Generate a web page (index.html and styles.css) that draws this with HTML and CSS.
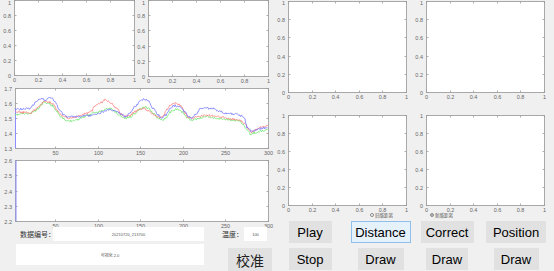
FILE: index.html
```html
<!DOCTYPE html>
<html lang="zh">
<head>
    <meta charset="UTF-8">
    <meta name="viewport" content="width=device-width, initial-scale=1.0">
    <title>数据可视化</title>
    <link rel="stylesheet" href="styles.css">
</head>
<body>
    <div class="app">
        <div class="left-panel">
            <div class="axes-row">
                <svg id="axTopLeft" class="axes" width="140" height="85"></svg>
                <svg id="axTopRight" class="axes" width="135" height="85"></svg>
            </div>
            <svg id="axSignal" class="axes" width="275" height="70"></svg>
            <svg id="axLower" class="axes" width="275" height="72"></svg>

            <div class="form">
                <div class="form-row">
                    <span class="form-label">数据编号：</span>
                    <div class="field field-id">20210720_213700</div>
                    <span class="form-label form-label-temp">温度：</span>
                    <div class="field field-temp">100</div>
                </div>
                <div class="form-row form-row-bottom">
                    <div class="field field-status">可视化 2.0</div>
                    <button class="btn btn-calibrate">校准</button>
                </div>
            </div>
        </div>

        <div class="right-panel">
            <div class="plot-grid">
                <div class="plot-cell">
                    <svg id="axRight1" class="axes" width="138" height="105"></svg>
                </div>
                <div class="plot-cell">
                    <svg id="axRight2" class="axes" width="141" height="105"></svg>
                </div>
                <div class="plot-cell">
                    <svg id="axRight3" class="axes" width="138" height="107"></svg>
                    <label class="radio radio-old"><span class="radio-mark"></span>旧版距离</label>
                </div>
                <div class="plot-cell">
                    <svg id="axRight4" class="axes" width="141" height="107"></svg>
                    <label class="radio radio-new"><span class="radio-mark checked"></span>新版距离</label>
                </div>
            </div>

            <div class="button-grid">
                <button class="btn btn-play">Play</button>
                <button class="btn btn-distance active">Distance</button>
                <button class="btn btn-correct">Correct</button>
                <button class="btn btn-position">Position</button>
                <button class="btn btn-stop">Stop</button>
                <button class="btn btn-draw-distance">Draw</button>
                <button class="btn btn-draw-correct">Draw</button>
                <button class="btn btn-draw-position">Draw</button>
            </div>
        </div>
    </div>

    <script src="script.js"></script>
</body>
</html>
```

FILE: styles.css
```css
* {
    margin: 0;
    padding: 0;
    box-sizing: border-box;
}

html,
body {
    width: 554px;
    height: 271px;
    overflow: hidden;
}

body {
    background: #f0f0f0;
    font-family: "Liberation Sans", Arial, sans-serif;
    color: #000;
}

.app {
    display: grid;
    grid-template-columns: 275px 279px;
    height: 271px;
}

/* ---------- axes ---------- */

svg.axes {
    display: block;
    overflow: visible;
}

.plot-area {
    fill: #fff;
    stroke: #a8a8a8;
    stroke-width: 1;
}

.tick {
    stroke: #9a9a9a;
    stroke-width: 0.8;
}

.tick-label {
    font-family: "Liberation Sans", Arial, sans-serif;
    font-size: 5.5px;
    fill: #666;
}

.trace {
    fill: none;
    stroke-width: 0.7;
    stroke-linejoin: round;
}

.trace-blue { stroke: #6464ff; }
.trace-red { stroke: #ff6e6e; }
.trace-green { stroke: #5ee45e; }
.trace-start { stroke: #8d8dff; stroke-width: 1; }

/* ---------- left panel ---------- */

.left-panel {
    display: flex;
    flex-direction: column;
}

.axes-row {
    display: flex;
}

.form {
    height: 44px;
}

.form-row {
    display: flex;
    align-items: center;
    height: 14px;
    padding-left: 20px;
}

.form-label {
    font-family: "Noto Sans CJK SC", sans-serif;
    font-size: 7px;
    color: #333;
    width: 33px;
    white-space: nowrap;
}

.form-label-temp {
    margin-left: 18px;
    width: 22px;
}

.field {
    background: #fff;
    height: 14px;
    display: flex;
    align-items: center;
    justify-content: center;
    font-family: "Liberation Sans", "Noto Sans CJK SC", sans-serif;
    font-size: 4px;
    color: #555;
}

.field-id {
    width: 151px;
}

.field-temp {
    width: 23px;
}

.form-row-bottom {
    height: auto;
    align-items: flex-start;
    margin-top: 3px;
    padding-left: 16px;
}

.field-status {
    width: 188px;
    height: 21px;
}

/* ---------- buttons ---------- */

.btn {
    font-family: "Liberation Sans", Arial, sans-serif;
    font-size: 13px;
    line-height: 1;
    color: #000;
    background: #e1e1e1;
    border: 1px solid #e1e1e1;
    height: 22px;
}

.btn.active {
    background: #e5f1fb;
    border-color: #8fc0ec;
}

.btn-calibrate {
    font-family: "Noto Sans CJK SC", sans-serif;
    font-size: 14px;
    color: #222;
    width: 44px;
    height: 24px;
    margin-left: 24px;
    margin-top: 4px;
}

/* ---------- right panel ---------- */

.right-panel {
    display: flex;
    flex-direction: column;
}

.plot-grid {
    display: grid;
    grid-template-columns: 138px 141px;
    grid-template-rows: 105px 113px;
}

.plot-cell {
    display: flex;
    flex-direction: column;
}

.radio {
    display: flex;
    align-items: center;
    gap: 1px;
    height: 6px;
    font-family: "Noto Sans CJK SC", sans-serif;
    font-size: 4.5px;
    color: #555;
}

.radio-old {
    padding-left: 95px;
}

.radio-new {
    padding-left: 17px;
}

.radio-mark {
    width: 4px;
    height: 4px;
    border: 0.5px solid #888;
    border-radius: 50%;
    background: #fff;
}

.radio-mark.checked {
    background: radial-gradient(circle, #333 0 40%, #fff 55%);
}

.button-grid {
    display: grid;
    grid-template-columns: 70px 71px 62px 76px;
    grid-template-rows: 22px 22px;
    row-gap: 5px;
    justify-items: center;
    margin-top: 3px;
}

.btn-play,
.btn-stop { width: 43px; }
.btn-distance { width: 60px; }
.btn-correct { width: 53px; }
.btn-position { width: 60px; }
.btn-draw-distance { width: 46px; }
.btn-draw-correct { width: 42px; }
.btn-draw-position { width: 45px; }
```

FILE: script.js
```js
const NS = 'http://www.w3.org/2000/svg';

function el(parent, tag, attrs, text) {
    const node = document.createElementNS(NS, tag);
    for (const k in attrs) node.setAttribute(k, attrs[k]);
    if (text !== undefined) node.textContent = text;
    parent.appendChild(node);
    return node;
}

function range(start, stop, step) {
    const out = [];
    for (let v = start; v <= stop + step / 2; v += step) out.push(+v.toFixed(2));
    return out;
}

// Draw a MATLAB style axes: white box, ticks on all four sides, tick labels
function drawAxes(id, cfg) {
    const svg = document.getElementById(id);
    const [x0, y0, x1, y1] = cfg.box;
    const sx = v => x0 + (v - cfg.xlim[0]) / (cfg.xlim[1] - cfg.xlim[0]) * (x1 - x0);
    const sy = v => y1 - (v - cfg.ylim[0]) / (cfg.ylim[1] - cfg.ylim[0]) * (y1 - y0);

    el(svg, 'rect', { x: x0 + 0.5, y: y0 + 0.5, width: x1 - x0, height: y1 - y0, class: 'plot-area' });

    cfg.xticks.forEach(v => {
        const x = Math.round(sx(v)) + 0.5;
        el(svg, 'line', { x1: x, y1: y1 + 0.5, x2: x, y2: y1 - 1.5, class: 'tick' });
        el(svg, 'line', { x1: x, y1: y0 + 0.5, x2: x, y2: y0 + 2.5, class: 'tick' });
        el(svg, 'text', { x: x, y: y1 + 7, 'text-anchor': 'middle', class: 'tick-label' }, String(v));
    });

    cfg.yticks.forEach(v => {
        const y = Math.round(sy(v)) + 0.5;
        el(svg, 'line', { x1: x0 + 0.5, y1: y, x2: x0 + 2.5, y2: y, class: 'tick' });
        el(svg, 'line', { x1: x1 + 0.5, y1: y, x2: x1 - 1.5, y2: y, class: 'tick' });
        // keep the top label inside the window
        el(svg, 'text', { x: x0 - 3, y: Math.max(y + 2, 4.5), 'text-anchor': 'end', class: 'tick-label' }, String(v));
    });

    return svg;
}

// small deterministic random so the noisy traces look the same every load
let seed = 11;
function rand() {
    seed = (seed * 16807) % 2147483647;
    return seed / 2147483647;
}

// key points are in 1/3 pixel units; fill in between with a bit of sensor noise
function tracePoints(keys) {
    const pts = [];
    for (let i = 0; i < keys.length - 1; i++) {
        const [ax, ay] = keys[i];
        const [bx, by] = keys[i + 1];
        for (let x = ax; x < bx; x += 2) {
            const t = (x - ax) / (bx - ax);
            const s = (1 - Math.cos(t * Math.PI)) / 2;
            const y = ay + (by - ay) * s + (rand() - 0.5) * 6;
            pts.push((x / 3).toFixed(2) + ',' + (y / 3).toFixed(2));
        }
    }
    const last = keys[keys.length - 1];
    pts.push((last[0] / 3).toFixed(2) + ',' + (last[1] / 3).toFixed(2));
    return pts.join(' ');
}

const unit = range(0, 1, 0.2);
const samples = range(50, 300, 50);

drawAxes('axTopLeft', { box: [14, 0, 134, 75], xlim: [0, 1], ylim: [0, 1], xticks: unit, yticks: unit });
drawAxes('axTopRight', { box: [8, 0, 128, 76], xlim: [0, 1], ylim: [0, 1], xticks: unit, yticks: unit });
drawAxes('axRight1', { box: [13, 1, 131, 92], xlim: [0, 1], ylim: [0, 1], xticks: unit, yticks: unit });
drawAxes('axRight2', { box: [13, 1, 131, 92], xlim: [0, 1], ylim: [0, 1], xticks: unit, yticks: unit });
drawAxes('axRight3', { box: [13, 10, 131, 100], xlim: [0, 1], ylim: [0, 1], xticks: unit, yticks: unit });
drawAxes('axRight4', { box: [13, 10, 131, 100], xlim: [0, 1], ylim: [0, 1], xticks: unit, yticks: unit });

const signal = drawAxes('axSignal', {
    box: [15, 3, 268, 63], xlim: [3, 300], ylim: [1.3, 1.7],
    xticks: samples, yticks: range(1.3, 1.7, 0.1)
});

const lower = drawAxes('axLower', {
    box: [15, 5, 268, 66], xlim: [3, 300], ylim: [2.2, 2.6],
    xticks: samples, yticks: range(2.2, 2.6, 0.1)
});
el(lower, 'line', { x1: 16, y1: 5.5, x2: 16, y2: 66, class: 'trace trace-start' });

const blue = [[45,72],[60,72],[90,70],[100,60],[110,48],[118,40],[128,42],[135,45],[145,40],[155,38],[165,50],[180,75],[192,90],[200,95],[230,95],[260,93],[290,88],[310,80],[330,74],[345,78],[360,85],[375,95],[390,85],[405,65],[420,50],[430,42],[445,48],[460,70],[475,90],[485,100],[498,90],[510,72],[522,62],[540,65],[555,80],[565,95],[575,100],[588,88],[600,72],[620,70],[640,70],[655,78],[680,85],[710,88],[725,92],[733,100],[742,128],[755,140],[770,133],[785,130],[803,128]];
const red = [[45,80],[70,82],[90,84],[105,75],[115,66],[125,55],[135,50],[150,52],[160,58],[172,75],[185,90],[195,97],[210,100],[225,96],[240,92],[260,85],[275,78],[285,62],[295,55],[305,52],[315,44],[325,48],[335,57],[350,70],[365,88],[375,95],[390,90],[405,80],[420,72],[430,70],[445,76],[460,88],[480,98],[490,92],[500,75],[510,60],[522,55],[535,57],[545,65],[555,85],[565,98],[578,100],[590,95],[605,93],[620,90],[635,93],[650,94],[665,97],[690,102],[710,104],[725,108],[735,118],[745,133],[755,142],[770,133],[785,126],[803,122]];
const green = [[45,90],[70,86],[90,86],[105,78],[115,70],[125,58],[133,50],[145,55],[158,62],[170,78],[185,98],[200,108],[215,107],[230,104],[250,96],[265,90],[285,83],[305,78],[320,72],[330,70],[345,80],[360,92],[375,100],[390,96],[405,85],[420,72],[435,65],[445,70],[460,85],[475,100],[485,106],[498,98],[510,82],[520,75],[535,74],[548,82],[562,98],[575,106],[590,103],[605,98],[620,93],[635,98],[650,100],[670,102],[700,106],[718,108],[730,118],[742,138],[752,148],[765,143],[785,138],[803,133]];

el(signal, 'line', { x1: 15.5, y1: 63, x2: 15.5, y2: 24, class: 'trace trace-start' });
el(signal, 'polyline', { points: tracePoints(green), class: 'trace trace-green' });
el(signal, 'polyline', { points: tracePoints(red), class: 'trace trace-red' });
el(signal, 'polyline', { points: tracePoints(blue), class: 'trace trace-blue' });
```
